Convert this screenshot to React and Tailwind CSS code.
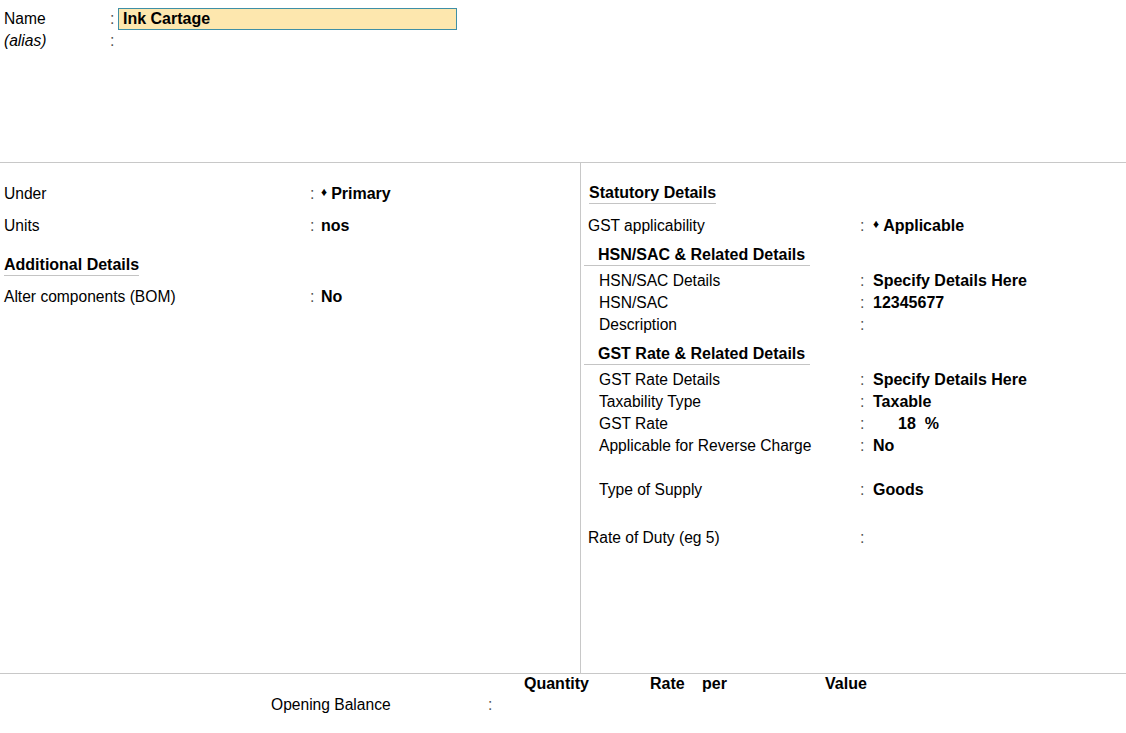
import React from "react";

const font = { fontFamily: '"Liberation Sans", Arial, sans-serif' };

function Colon() {
  return <span className="text-[#555]">:</span>;
}

function Heading({ children, indent = false }) {
  return (
    <div className={indent ? "pl-[3px]" : ""}>
      <div
        className={`h-[22px] flex items-center font-bold text-[16px] border-b border-[#c4c4c4] ${
          indent ? "pl-[14px] w-[226px]" : "w-fit"
        }`}
      >
        {children}
      </div>
    </div>
  );
}

function RightRow({ label, value, indent = false, diamond = false, className = "" }) {
  return (
    <div className={`flex items-center h-[22px] ${className}`}>
      <div className={`text-[15.6px] ${indent ? "pl-[18px] w-[279px]" : "pl-[7px] w-[279px]"}`}>
        {label}
      </div>
      <div className="w-[13px]">
        <Colon />
      </div>
      <div className="font-bold text-[16px] flex items-center">
        {diamond && <span className="text-[12px] mr-[4px] -mt-1">♦</span>}
        {value}
      </div>
    </div>
  );
}

function LeftRow({ label, value, diamond = false, className = "" }) {
  return (
    <div className={`flex items-center h-[22px] ${className}`}>
      <div className="pl-1 w-[310px] text-[15.6px]">{label}</div>
      <div className="w-[11px]">
        <Colon />
      </div>
      <div className="font-bold text-[16px] flex items-center">
        {diamond && <span className="text-[12px] mr-[4px] -mt-1">♦</span>}
        {value}
      </div>
    </div>
  );
}

export default function App() {
  return (
    <div className="w-[1126px] h-[733px] bg-white text-black overflow-hidden" style={font}>
      {/* Top: name / alias */}
      <div className="h-[163px] border-b border-[#c8c8c8] pt-[7px]">
        <div className="flex items-center h-[23px]">
          <div className="pl-1 w-[110px] text-[15.6px]">Name</div>
          <div className="w-[8px]">
            <Colon />
          </div>
          <div className="w-[339px] h-[22px] bg-[#fde7ae] border border-[#3f8fa6] flex items-center pl-[4px] font-bold text-[16px]">
            Ink Cartage
          </div>
        </div>
        <div className="flex items-center h-[22px]">
          <div className="pl-1 w-[110px] text-[15.6px] italic">(alias)</div>
          <Colon />
        </div>
      </div>

      {/* Middle */}
      <div className="flex h-[511px] border-b border-[#c8c8c8]">
        <div className="w-[581px] border-r border-[#c8c8c8] pt-[20px]">
          <LeftRow label="Under" value="Primary" diamond />
          <LeftRow label="Units" value="nos" className="mt-[10px]" />
          <div className="mt-[17px] pl-1">
            <div className="w-fit h-[22px] flex items-center font-bold text-[16px] border-b border-[#c4c4c4]">
              Additional Details
            </div>
          </div>
          <LeftRow label="Alter components (BOM)" value="No" className="mt-[10px]" />
        </div>

        <div className="flex-1 pt-[19px]">
          <div className="pl-[8px]">
            <Heading>Statutory Details</Heading>
          </div>
          <RightRow label="GST applicability" value="Applicable" diamond className="mt-[11px]" />
          <div className="mt-[7px]">
            <Heading indent>HSN/SAC &amp; Related Details</Heading>
          </div>
          <div className="mt-[4px]">
            <RightRow indent label="HSN/SAC Details" value="Specify Details Here" />
            <RightRow indent label="HSN/SAC" value="12345677" />
            <RightRow indent label="Description" value="" />
          </div>
          <div className="mt-[7px]">
            <Heading indent>GST Rate &amp; Related Details</Heading>
          </div>
          <div className="mt-[4px]">
            <RightRow indent label="GST Rate Details" value="Specify Details Here" />
            <RightRow indent label="Taxability Type" value="Taxable" />
            <RightRow
              indent
              label="GST Rate"
              value={
                <span className="pl-[25px]">
                  18<span className="ml-[9px]">%</span>
                </span>
              }
            />
            <RightRow indent label="Applicable for Reverse Charge" value="No" />
            <RightRow indent label="Type of Supply" value="Goods" className="mt-[22px]" />
          </div>
          <RightRow label="Rate of Duty (eg 5)" value="" className="mt-[26px]" />
        </div>
      </div>

      {/* Bottom: opening balance */}
      <div>
        <div className="flex items-center h-[20px] pl-[524px] font-bold text-[16px]">
          <div className="w-[126px]">Quantity</div>
          <div className="w-[52px]">Rate</div>
          <div className="w-[123px]">per</div>
          <div>Value</div>
        </div>
        <div className="flex items-center h-[22px] pl-[271px] text-[15.6px]">
          <div className="w-[217px]">Opening Balance</div>
          <Colon />
        </div>
      </div>
    </div>
  );
}
